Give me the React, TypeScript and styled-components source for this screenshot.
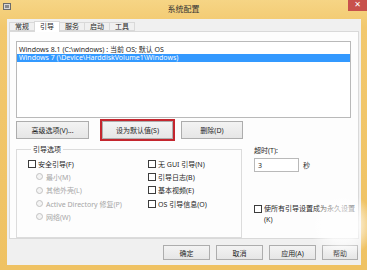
import React from 'react';
import styled, { createGlobalStyle } from 'styled-components';

const Global = createGlobalStyle`
  html, body { margin: 0; padding: 0; }
  body {
    width: 367px; height: 270px; overflow: hidden;
    font-family: "Noto Sans", "Noto Sans CJK SC", sans-serif;
    font-size: 7px; color: #1f1f1f;
  }
  * { box-sizing: border-box; }
`;

const Window = styled.div`
  position: relative;
  width: 367px; height: 270px;
  background: linear-gradient(180deg, #f6d585 0%, #f2c86e 10%, #efc263 100%);
  display: flex; flex-direction: column;
  overflow: hidden;
`;

const TitleBar = styled.div`
  height: 19px;
  display: grid;
  grid-template-columns: 1fr auto 1fr;
  align-items: start;
`;

const AppIcon = styled.svg`
  margin: 3px 0 0 3px;
  width: 8px; height: 8px;
`;

const Title = styled.div`
  font-size: 8px; line-height: 8px; color: #333;
  padding-top: 5px;
`;

const Close = styled.div`
  justify-self: end;
  width: 19px; height: 11px;
  background: #c8514c;
  color: #fff;
  font-size: 8px; line-height: 10px; text-align: center;
  font-family: "DejaVu Sans", sans-serif;
`;

const Body = styled.div`
  flex: 1;
  margin: 0 6px 5px 7px;
  background: #f0f0f0;
  padding: 2px 2px 0 2px;
  display: flex; flex-direction: column;
`;

const TabStrip = styled.div`
  height: 10px;
  display: flex; align-items: flex-end;
  position: relative; z-index: 1;
`;

const Tab = styled.div<{ $active?: boolean }>`
  width: 26px;
  height: ${p => (p.$active ? 11 : 9)}px;
  margin-bottom: ${p => (p.$active ? -1 : 0)}px;
  border: 1px solid #d9d9d9;
  border-bottom: ${p => (p.$active ? 'none' : '1px solid #d9d9d9')};
  margin-left: -1px;
  background: ${p => (p.$active ? '#ffffff' : '#f0f0f0')};
  display: flex; align-items: center; justify-content: center;
  line-height: 8px;
  &:first-child { margin-left: 0; }
`;

const Panel = styled.div`
  height: 208px;
  border: 1px solid #d9d9d9;
  background: #fdfdfd;
  padding: 9px 7px 0 6px;
  display: flex; flex-direction: column;
`;

const ListBox = styled.div`
  height: 77px;
  border: 1px solid #b9b9b9;
  background: #fff;
  padding: 4px 0 0 0;
`;

const ListRow = styled.div<{ $selected?: boolean }>`
  height: 8px; line-height: 8px;
  padding-left: 2px;
  white-space: nowrap;
  background: ${p => (p.$selected ? '#3399ff' : 'transparent')};
  color: ${p => (p.$selected ? '#fff' : '#1f1f1f')};
`;

const ButtonRow = styled.div`
  display: flex; align-items: center;
  margin-top: 1px;
  height: 22px;
`;

const Button = styled.div<{ $w: number }>`
  width: ${p => p.$w}px;
  height: 18px;
  border: 1px solid #adadad;
  background: linear-gradient(180deg, #f3f3f3, #e6e6e6);
  display: flex; align-items: center; justify-content: center;
  white-space: nowrap;
`;

const Highlight = styled.div`
  border: 2px solid #c4262e;
  margin: 0 6px 0 11px;
`;

const Lower = styled.div`
  display: flex;
  margin-top: 4px;
`;

const Group = styled.fieldset`
  width: 226px;
  height: 93px;
  margin: 0;
  padding: 3px 0 0 11px;
  border: 1px solid #dcdcdc;
  display: grid;
  grid-template-columns: 120px 1fr;
  align-content: start;
`;

const Legend = styled.legend`
  padding: 0 2px;
  margin-left: 3px;
  line-height: 9px;
`;

const Col = styled.div`
  display: flex; flex-direction: column;
`;

const Option = styled.div<{ $indent?: boolean; $disabled?: boolean }>`
  height: 13.3px;
  display: flex; align-items: center;
  gap: 2px;
  padding-left: ${p => (p.$indent ? 8 : 0)}px;
  color: ${p => (p.$disabled ? '#a6a6a6' : '#1f1f1f')};
  white-space: nowrap;
`;

const Box = styled.span`
  width: 8px; height: 8px;
  border: 1px solid #3c3c3c;
  background: #fff;
  flex: none;
`;

const Radio = styled.span`
  width: 7px; height: 7px;
  border: 1px solid #c2c2c2;
  border-radius: 50%;
  background: #f4f4f4;
  flex: none;
  margin-right: 1px;
`;

const Right = styled.div`
  margin-left: 12px;
  padding-top: 1px;
  display: flex; flex-direction: column;
  flex: 1;
  min-width: 0;
`;

const Label = styled.div`
  line-height: 9px;
`;

const TimeoutRow = styled.div`
  display: flex; align-items: center; gap: 4px;
  margin-top: 3px;
`;

const Input = styled.div`
  width: 45px; height: 14px;
  border: 1px solid #b9b9b9;
  background: #fff;
  padding-left: 3px;
  display: flex; align-items: center;
`;

const Permanent = styled.div`
  display: flex; gap: 2px;
  margin-top: 31px;
  line-height: 11px;
  white-space: nowrap;
`;

const PermBox = styled(Box)`
  margin-top: 2px;
`;

const Footer = styled.div`
  display: flex; justify-content: flex-end; gap: 6px;
  margin-top: 6px;
  padding-right: 1px;
`;

const FootButton = styled(Button)`
  height: 15px;
`;

const Watermark = styled.div`
  position: absolute;
  right: -8px; bottom: 12px;
  width: 66px; height: 66px;
  border-radius: 50%;
  background: radial-gradient(circle, rgba(255,255,255,0.7) 35%, rgba(255,255,255,0) 70%);
  pointer-events: none;
`;

export default function App() {
  return (
    <>
      <Global />
      <Window>
        <TitleBar>
          <AppIcon viewBox="0 0 8 8">
            <rect x="0.5" y="0.5" width="7" height="6" fill="#d7d7d7" stroke="#6b6b6b" />
            <rect x="2" y="2" width="4" height="3" fill="#8a8a8a" />
          </AppIcon>
          <Title>系统配置</Title>
          <Close>✕</Close>
        </TitleBar>
        <Body>
          <TabStrip>
            <Tab>常规</Tab>
            <Tab $active>引导</Tab>
            <Tab>服务</Tab>
            <Tab>启动</Tab>
            <Tab>工具</Tab>
          </TabStrip>
          <Panel>
            <ListBox>
              <ListRow>Windows 8.1 (C:\windows) : 当前 OS; 默认 OS</ListRow>
              <ListRow $selected>Windows 7 (\Device\HarddiskVolume1\Windows)</ListRow>
            </ListBox>
            <ButtonRow>
              <Button $w={73}>高级选项(V)...</Button>
              <Highlight>
                <Button $w={71}>设为默认值(S)</Button>
              </Highlight>
              <Button $w={62}>删除(D)</Button>
            </ButtonRow>
            <Lower>
              <Group>
                <Legend>引导选项</Legend>
                <Col>
                  <Option><Box />安全引导(F)</Option>
                  <Option $indent $disabled><Radio />最小(M)</Option>
                  <Option $indent $disabled><Radio />其他外壳(L)</Option>
                  <Option $indent $disabled><Radio />Active Directory 修复(P)</Option>
                  <Option $indent $disabled><Radio />网络(W)</Option>
                </Col>
                <Col>
                  <Option><Box />无 GUI 引导(N)</Option>
                  <Option><Box />引导日志(B)</Option>
                  <Option><Box />基本视频(E)</Option>
                  <Option><Box />OS 引导信息(O)</Option>
                </Col>
              </Group>
              <Right>
                <Label>超时(T):</Label>
                <TimeoutRow>
                  <Input>3</Input>
                  <span>秒</span>
                </TimeoutRow>
                <Permanent>
                  <PermBox />
                  <span>使所有引导设置成为永久设置<br />(K)</span>
                </Permanent>
              </Right>
            </Lower>
          </Panel>
          <Footer>
            <FootButton $w={47}>确定</FootButton>
            <FootButton $w={47}>取消</FootButton>
            <FootButton $w={47}>应用(A)</FootButton>
            <FootButton $w={36}>帮助</FootButton>
          </Footer>
        </Body>
        <Watermark />
      </Window>
    </>
  );
}
